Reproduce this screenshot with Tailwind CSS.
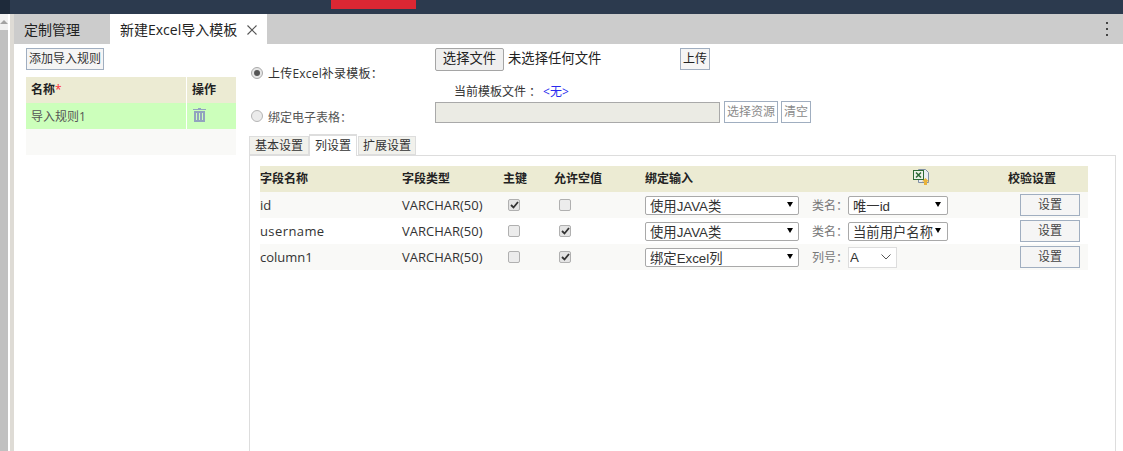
<!DOCTYPE html>
<html lang="zh-CN">
<head>
  <meta charset="UTF-8">
  <title>新建Excel导入模板</title>
  <script src="https://cdn.jsdelivr.net/npm/@tailwindcss/browser@4"></script>
</head>
<body class="bg-white h-[451px] w-[1123px] overflow-hidden font-['Open_Sans','Noto_Sans_CJK_SC',sans-serif] text-[13px] text-[#333]">
  <!-- Top bar -->
  <header class="flex h-[14px] bg-[#2c3a4e]">
    <div class="w-[10px] bg-[#1e2a3a]"></div>
    <div class="ml-[321px] w-[85px] h-[9px] bg-[#dc2733]"></div>
  </header>

  <div class="flex h-[437px]">
    <!-- Outer scrollbar -->
    <div class="w-[8px] flex flex-col bg-[#c0c0c0]">
      <div class="h-[16px] bg-[#f1f1f1] flex justify-center pt-[6px]">
        <div class="w-0 h-0 border-x-[4px] border-x-transparent border-b-[4px] border-b-[#a3a3a3]"></div>
      </div>
    </div>
    <div class="w-[2px] bg-white"></div>
    <div class="w-[4px] bg-[#dedbd5]"></div>

    <main class="flex-1 flex flex-col min-w-0">
      <!-- Tabs -->
      <nav class="flex h-[30px] items-stretch bg-[#cccccc] text-[14px]">
        <div class="w-[96px] pl-[10px] flex items-center text-[#222]">定制管理</div>
        <div class="w-[157px] pl-[10px] bg-white flex items-center text-[#222]">
          <span>新建Excel导入模板</span>
          <svg class="ml-[10px] mt-[1px]" width="10" height="10" viewBox="0 0 10 10" fill="none" stroke="#555" stroke-width="1.1"><path d="M.5.5l9 9M9.5.5l-9 9"/></svg>
        </div>
        <div class="ml-auto mr-[15px] flex flex-col justify-center gap-[4px]">
          <span class="w-[2px] h-[2px] bg-[#444]"></span>
          <span class="w-[2px] h-[2px] bg-[#444]"></span>
          <span class="w-[2px] h-[2px] bg-[#444]"></span>
        </div>
      </nav>

      <div class="flex flex-1 min-h-0">
        <!-- Rules panel -->
        <section class="w-[235px] pl-[12px] pt-[4px] shrink-0">
          <button class="h-[22px] w-[78px] border border-[#a0aec0] bg-[#f5f5f5] text-[12px] text-[#333] leading-none">添加导入规则</button>
          <div class="mt-[7px] w-[210px] grid grid-cols-[160px_49px] gap-x-[1px]">
            <div class="h-[26px] bg-[#ecebd3] pl-[5px] flex items-center text-[12px] font-bold text-[#222]">名称<span class="text-red-500 font-normal">*</span></div>
            <div class="h-[26px] bg-[#ecebd3] pl-[5px] flex items-center text-[12px] font-bold text-[#222]">操作</div>
            <div class="h-[26px] bg-[#ccffbb] pl-[5px] pt-[2px] flex items-center text-[12px] text-[#555]">导入规则1</div>
            <div class="h-[26px] bg-[#ccffbb] pl-[6px] pb-[2px] flex items-center">
              <svg width="13" height="14" viewBox="0 0 13 14"><path fill="#92a3bf" d="M5 0h3v1h5v1H0V1h5zM1 3h11v11H1zM3 5v7h1V5zm3 0v7h1V5zm3 0v7h1V5z" fill-rule="evenodd"/></svg>
            </div>
            <div class="col-span-2 h-[26px] bg-[#f9f9f7]"></div>
          </div>
        </section>

        <!-- Template panel -->
        <section class="flex-1 min-w-0 flex flex-col pr-[7px]">
          <div class="grid grid-cols-[185px_1fr] pl-[1px] text-[12px]">
            <label class="flex items-center gap-[5px] h-[57px] text-[#333]">
              <span class="w-[12px] h-[12px] rounded-full border border-[#a9a9a9] bg-[#e6e6e6] flex items-center justify-center ml-[1px]"><span class="w-[6px] h-[6px] rounded-full bg-[#555]"></span></span>
              <span class="pt-[2px] tracking-[0.2px]">上传Excel补录模板<span class="font-['Noto_Sans_CJK_TC']">：</span></span>
            </label>
            <div class="pt-[3px]">
              <div class="flex items-center h-[24px] text-[13.33px]">
                <button class="w-[69px] h-[23px] border border-[#a5a5a5] rounded-[2px] bg-[#efefef] text-[13.33px] text-[#222]">选择文件</button>
                <span class="ml-[4px] w-[172px] text-[#222]">未选择任何文件</span>
                <button class="w-[30px] h-[22px] border border-[#a0aec0] bg-[#f5f5f5] text-[12px] text-[#222]">上传</button>
              </div>
              <div class="mt-[14px] pl-[19px] flex items-center h-[14px] text-[#333]">当前模板文件<span class="font-['Noto_Sans_CJK_TC']">：</span><span class="ml-[5px] text-[12px] text-[#2a2aee]">&lt;无&gt;</span></div>
            </div>
            <label class="flex items-center gap-[5px] h-[23px] pt-[7px] text-[#555]">
              <span class="w-[12px] h-[12px] rounded-full border border-[#b5b5b5] bg-[#ebebeb] ml-[1px]"></span>
              <span class="pt-[2px]">绑定电子表格<span class="font-['Noto_Sans_CJK_TC']">：</span></span>
            </label>
            <div class="flex items-start gap-[4px] h-[23px]">
              <input disabled class="w-[285px] h-[21px] mt-[1px] border border-[#a9a9a9] bg-[#ebebe4]">
              <button class="w-[54px] h-[22px] border border-[#a0aec0] bg-white text-[12px] text-[#8a8a8a]">选择资源</button>
              <button class="w-[30px] h-[22px] -ml-[1px] border border-[#a0aec0] bg-white text-[12px] text-[#8a8a8a]">清空</button>
            </div>
          </div>

          <!-- Sub tabs -->
          <div class="mt-[10px] flex h-[22px] items-start text-[12px] text-[#333] -mb-[1px] relative">
            <div class="mt-[2px] w-[60px] h-[19px] bg-[#f1f1ec] border border-[#dddddd] flex items-center justify-center">基本设置</div>
            <div class="w-[48px] h-[22px] bg-white border border-[#dddddd] border-b-0 border-t-2 flex items-center justify-center z-10">列设置</div>
            <div class="mt-[2px] ml-[1px] w-[58px] h-[19px] bg-[#f1f1ec] border border-[#dddddd] flex items-center justify-center">扩展设置</div>
          </div>

          <!-- Column settings -->
          <div class="flex-1 border border-b-0 border-[#dddddd] pt-[10px] pl-[10px] pr-[26px]">
            <div class="grid grid-cols-[142px_101px_51px_91px_363px_80px] items-center">
              <div class="contents font-bold text-[12px] text-[#222]">
                <div class="h-[26px] bg-[#ecebd3] flex items-center">字段名称</div>
                <div class="h-[26px] bg-[#ecebd3] flex items-center">字段类型</div>
                <div class="h-[26px] bg-[#ecebd3] flex items-center">主键</div>
                <div class="h-[26px] bg-[#ecebd3] flex items-center">允许空值</div>
                <div class="h-[26px] bg-[#ecebd3] flex items-center justify-between pr-[78px]">
                  <span>绑定输入</span>
                  <svg class="-mt-[4px]" width="17" height="16" viewBox="0 0 17 16">
                    <path fill="#e8edf2" stroke="#7f8fa3" d="M5.500.5h7l3 3v10h-10z"/>
                    <rect x=".5" y="1.500" width="10" height="9" fill="#eef3ea" stroke="#2d6a35"/>
                    <path stroke="#2d6a35" stroke-width="1.500" d="M3 3.500l5 5M8 3.500l-5 5"/>
                    <path fill="#e9b33a" d="M12.500 9l3.500 3.500h-2V16h-3v-3.500H9z"/>
                  </svg>
                </div>
                <div class="h-[26px] bg-[#ecebd3] flex items-center">校验设置</div>
              </div>

              <!-- id -->
              <div class="h-[26px] pt-[2px] bg-[#f9f9f7] flex items-center">id</div>
              <div class="h-[26px] pt-[2px] bg-[#f9f9f7] flex items-center">VARCHAR(50)</div>
              <div class="h-[26px] bg-[#f9f9f7] flex items-center pl-[5px]">
                <span class="w-[12px] h-[12px] rounded-[2px] border border-[#b0b0b0] bg-[#e4e4e4] flex items-center justify-center"><svg width="9" height="8" viewBox="0 0 9 8" fill="none" stroke="#333" stroke-width="1.800"><path d="M1 4l2.500 2.500L8 1"/></svg></span>
              </div>
              <div class="h-[26px] bg-[#f9f9f7] flex items-center pl-[5px]">
                <span class="w-[12px] h-[12px] rounded-[2px] border border-[#b0b0b0] bg-[#ececec]"></span>
              </div>
              <div class="h-[26px] bg-[#f9f9f7] flex items-center text-[#777]">
                <div class="relative w-[154px] h-[19px]">
                  <select class="w-full h-full appearance-none border border-[#a9a9a9] rounded-[2px] bg-white pl-[4px] font-['Liberation_Sans','Noto_Sans_CJK_SC',sans-serif] text-[13.33px] text-[#333]"><option>使用JAVA类</option></select>
                  <span class="absolute right-[6px] top-[6px] w-0 h-0 border-x-[3px] border-x-transparent border-t-[5px] border-t-black"></span>
                </div>
                <span class="ml-[13px] w-[36px] whitespace-nowrap text-[12px]">类名<span class="font-['Noto_Sans_CJK_TC']">：</span></span>
                <div class="relative w-[100px] h-[19px]">
                  <select class="w-full h-full appearance-none border border-[#a9a9a9] rounded-[2px] bg-white pl-[4px] font-['Liberation_Sans','Noto_Sans_CJK_SC',sans-serif] text-[13.33px] text-[#333]"><option>唯一id</option></select>
                  <span class="absolute right-[7px] top-[6px] w-0 h-0 border-x-[3px] border-x-transparent border-t-[5px] border-t-black"></span>
                </div>
              </div>
              <div class="h-[26px] bg-[#f9f9f7] flex items-center">
                <button class="ml-[12px] w-[60px] h-[22px] border border-[#a0aec0] bg-[#f5f5f5] text-[12px] text-[#444]">设置</button>
              </div>

              <!-- username -->
              <div class="h-[26px] pt-[2px] flex items-center tracking-[0.4px]">username</div>
              <div class="h-[26px] pt-[2px] flex items-center">VARCHAR(50)</div>
              <div class="h-[26px] flex items-center pl-[5px]">
                <span class="w-[12px] h-[12px] rounded-[2px] border border-[#b0b0b0] bg-[#ececec]"></span>
              </div>
              <div class="h-[26px] flex items-center pl-[5px]">
                <span class="w-[12px] h-[12px] rounded-[2px] border border-[#b0b0b0] bg-[#e4e4e4] flex items-center justify-center"><svg width="9" height="8" viewBox="0 0 9 8" fill="none" stroke="#333" stroke-width="1.800"><path d="M1 4l2.500 2.500L8 1"/></svg></span>
              </div>
              <div class="h-[26px] flex items-center text-[#777]">
                <div class="relative w-[154px] h-[19px]">
                  <select class="w-full h-full appearance-none border border-[#a9a9a9] rounded-[2px] bg-white pl-[4px] font-['Liberation_Sans','Noto_Sans_CJK_SC',sans-serif] text-[13.33px] text-[#333]"><option>使用JAVA类</option></select>
                  <span class="absolute right-[6px] top-[6px] w-0 h-0 border-x-[3px] border-x-transparent border-t-[5px] border-t-black"></span>
                </div>
                <span class="ml-[13px] w-[36px] whitespace-nowrap text-[12px]">类名<span class="font-['Noto_Sans_CJK_TC']">：</span></span>
                <div class="relative w-[100px] h-[19px]">
                  <select class="w-full h-full appearance-none border border-[#a9a9a9] rounded-[2px] bg-white pl-[4px] pr-[10px] font-['Liberation_Sans','Noto_Sans_CJK_SC',sans-serif] text-[13.33px] text-[#333]"><option>当前用户名称</option></select>
                  <span class="absolute right-[7px] top-[6px] w-0 h-0 border-x-[3px] border-x-transparent border-t-[5px] border-t-black"></span>
                </div>
              </div>
              <div class="h-[26px] flex items-center">
                <button class="ml-[12px] w-[60px] h-[22px] border border-[#a0aec0] bg-[#f5f5f5] text-[12px] text-[#444]">设置</button>
              </div>

              <!-- column1 -->
              <div class="h-[26px] pt-[2px] bg-[#f9f9f7] flex items-center">column1</div>
              <div class="h-[26px] pt-[2px] bg-[#f9f9f7] flex items-center">VARCHAR(50)</div>
              <div class="h-[26px] bg-[#f9f9f7] flex items-center pl-[5px]">
                <span class="w-[12px] h-[12px] rounded-[2px] border border-[#b0b0b0] bg-[#ececec]"></span>
              </div>
              <div class="h-[26px] bg-[#f9f9f7] flex items-center pl-[5px]">
                <span class="w-[12px] h-[12px] rounded-[2px] border border-[#b0b0b0] bg-[#e4e4e4] flex items-center justify-center"><svg width="9" height="8" viewBox="0 0 9 8" fill="none" stroke="#333" stroke-width="1.800"><path d="M1 4l2.500 2.500L8 1"/></svg></span>
              </div>
              <div class="h-[26px] bg-[#f9f9f7] flex items-center text-[#777]">
                <div class="relative w-[154px] h-[19px]">
                  <select class="w-full h-full appearance-none border border-[#a9a9a9] rounded-[2px] bg-white pl-[4px] font-['Liberation_Sans','Noto_Sans_CJK_SC',sans-serif] text-[13.33px] text-[#333]"><option>绑定Excel列</option></select>
                  <span class="absolute right-[6px] top-[6px] w-0 h-0 border-x-[3px] border-x-transparent border-t-[5px] border-t-black"></span>
                </div>
                <span class="ml-[13px] w-[36px] whitespace-nowrap text-[12px]">列号<span class="font-['Noto_Sans_CJK_TC']">：</span></span>
                <div class="relative w-[49px] h-[21px]">
                  <select class="w-full h-full appearance-none border border-[#dddddd] bg-white pl-[1px] font-['Liberation_Sans','Noto_Sans_CJK_SC',sans-serif] text-[13.33px] text-[#333]"><option>A</option></select>
                  <svg class="absolute right-[6px] top-[7px]" width="10" height="6" viewBox="0 0 10 6" fill="none" stroke="#555"><path d="M.5.500L5 5 9.500.5"/></svg>
                </div>
              </div>
              <div class="h-[26px] bg-[#f9f9f7] flex items-center">
                <button class="ml-[12px] w-[60px] h-[22px] border border-[#a0aec0] bg-[#f5f5f5] text-[12px] text-[#444]">设置</button>
              </div>
            </div>
          </div>
        </section>
      </div>
    </main>
  </div>
</body>
</html>
